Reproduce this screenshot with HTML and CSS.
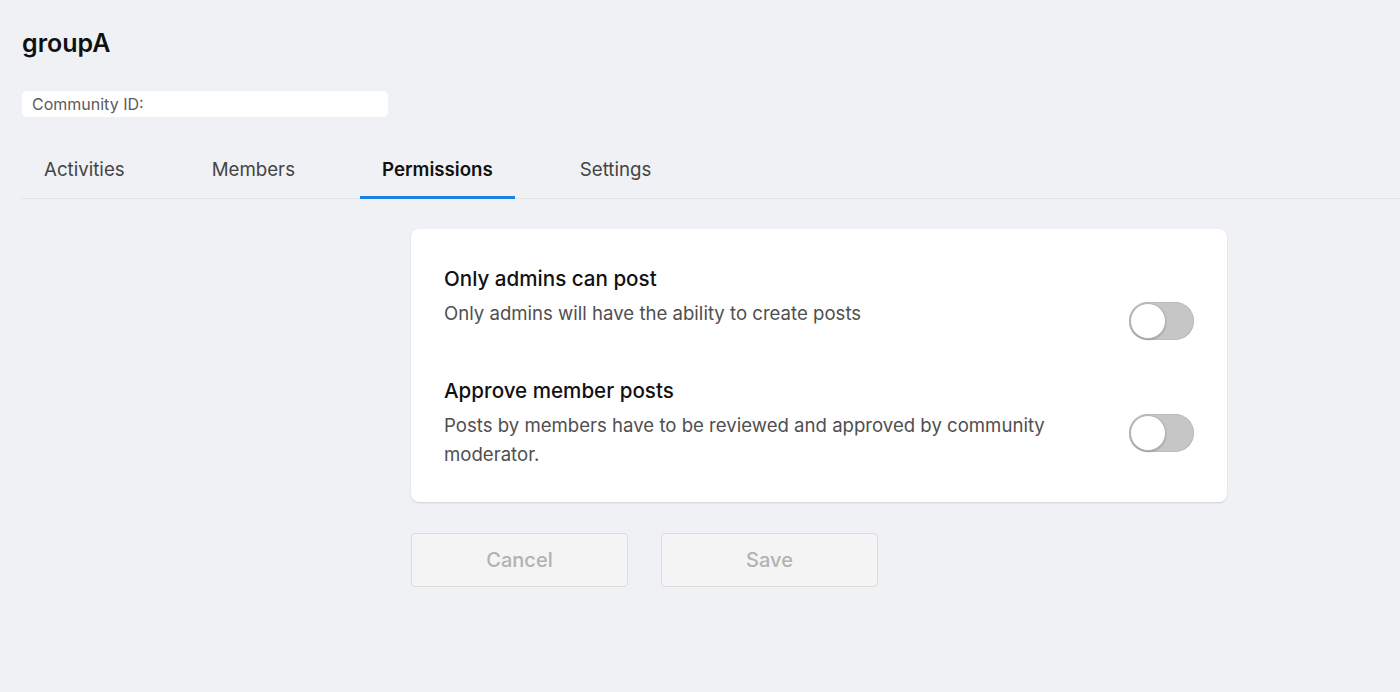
FILE: index.html
```html
<!DOCTYPE html>
<html lang="en">
<head>
    <meta charset="UTF-8">
    <meta name="viewport" content="width=device-width, initial-scale=1.0">
    <title>groupA</title>
    <link rel="stylesheet" href="styles.css">
</head>
<body>
    <div class="page">
        <h1 class="page-title">groupA</h1>
        <div class="community-id">Community ID:</div>

        <nav class="tabs">
            <a class="tab">Activities</a>
            <a class="tab">Members</a>
            <a class="tab active">Permissions</a>
            <a class="tab">Settings</a>
        </nav>

        <div class="content">
            <div class="card">
                <div class="perm-row">
                    <div class="perm-title">Only admins can post</div>
                    <div class="perm-body">
                        <div class="perm-desc">Only admins will have the ability to create posts</div>
                        <label class="switch">
                            <input type="checkbox">
                            <span class="slider"></span>
                        </label>
                    </div>
                </div>
                <div class="perm-row">
                    <div class="perm-title">Approve member posts</div>
                    <div class="perm-body">
                        <div class="perm-desc">Posts by members have to be reviewed and approved by community moderator.</div>
                        <label class="switch">
                            <input type="checkbox">
                            <span class="slider"></span>
                        </label>
                    </div>
                </div>
            </div>

            <div class="actions">
                <button class="btn" disabled>Cancel</button>
                <button class="btn" disabled>Save</button>
            </div>
        </div>
    </div>
</body>
</html>
```

FILE: styles.css
```css
body {
    background-color: #f0f1f4;
    color: #111111;
    font-family: Inter, "Liberation Sans", sans-serif;
    margin: 0;
}

.page {
    padding: 27px 0 0 22px;
}

.page-title {
    font-size: 25px;
    font-weight: 600;
    line-height: 32px;
    margin: 0 0 32px 0;
}

.community-id {
    background-color: #ffffff;
    border-radius: 5px;
    width: 356px;
    height: 26px;
    line-height: 26px;
    padding-left: 10px;
    font-size: 16px;
    color: #5a5a5a;
}

.tabs {
    display: flex;
    gap: 43px;
    margin-top: 41px;
    border-bottom: 1px solid #e1e3e7;
}

.tab {
    padding: 0 22px 14px 22px;
    font-size: 18.7px;
    line-height: 24px;
    color: #444444;
    border-bottom: 3px solid transparent;
    margin-bottom: -1px;
    cursor: pointer;
}

.tab.active {
    color: #111111;
    font-weight: 600;
    border-bottom-color: #1a80e5;
}

.content {
    margin-left: 389px;
    width: 816px;
    padding-top: 30px;
}

.card {
    background-color: #ffffff;
    border-radius: 8px;
    box-shadow: 0 1px 2px rgba(0, 0, 0, 0.14);
    padding: 36px 33px 33px 33px;
}

.perm-row + .perm-row {
    margin-top: 37px;
}

.perm-title {
    font-size: 20.6px;
    font-weight: 500;
    line-height: 28px;
    color: #111111;
    margin-bottom: 6px;
}

.perm-body {
    display: flex;
    justify-content: space-between;
    align-items: flex-start;
}

.perm-desc {
    font-size: 18.6px;
    line-height: 29px;
    color: #4f4f4f;
    max-width: 620px;
}

.switch {
    position: relative;
    width: 65px;
    height: 38px;
    margin-top: 3px;
    flex-shrink: 0;
}

.switch input {
    display: none;
}

.slider {
    position: absolute;
    inset: 0;
    background-color: #c6c6c6;
    border-radius: 19px;
    box-shadow: inset 0 0 0 1px #bcbcbc;
    cursor: pointer;
}

.slider::before {
    content: "";
    position: absolute;
    left: 1px;
    top: 1px;
    width: 34px;
    height: 34px;
    border-radius: 50%;
    background-color: #ffffff;
    border: 1px solid #b4b4b4;
    box-shadow: 0 1px 2px rgba(0, 0, 0, 0.2);
}

.actions {
    display: flex;
    gap: 33px;
    margin-top: 31px;
}

.btn {
    width: 217px;
    height: 54px;
    background-color: #f4f4f4;
    border: 1px solid #dcdcdc;
    border-radius: 4px;
    font-family: Inter, "Liberation Sans", sans-serif;
    font-size: 20px;
    font-weight: 500;
    color: #b2b2b2;
}
```
